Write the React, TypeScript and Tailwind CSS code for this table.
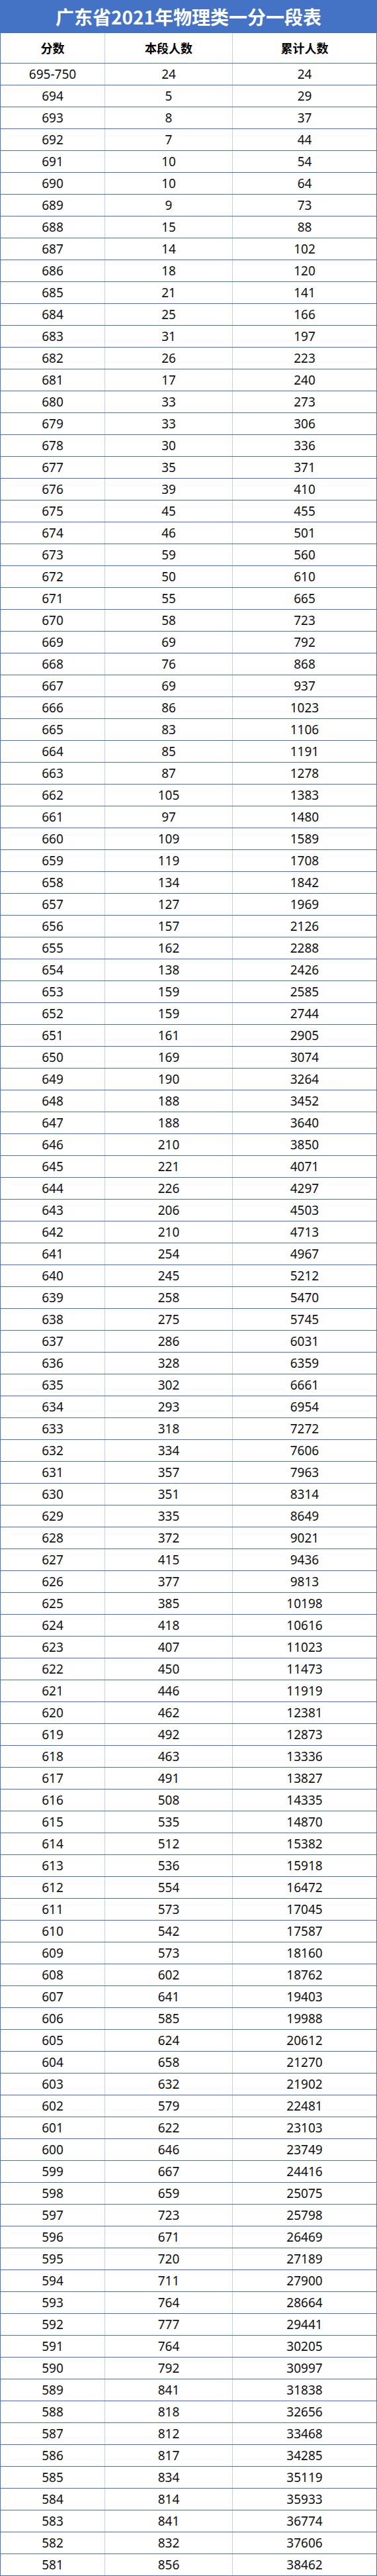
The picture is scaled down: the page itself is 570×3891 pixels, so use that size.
const rows: [string, number, number][] = [
  ["695-750", 24, 24],
  ["694", 5, 29],
  ["693", 8, 37],
  ["692", 7, 44],
  ["691", 10, 54],
  ["690", 10, 64],
  ["689", 9, 73],
  ["688", 15, 88],
  ["687", 14, 102],
  ["686", 18, 120],
  ["685", 21, 141],
  ["684", 25, 166],
  ["683", 31, 197],
  ["682", 26, 223],
  ["681", 17, 240],
  ["680", 33, 273],
  ["679", 33, 306],
  ["678", 30, 336],
  ["677", 35, 371],
  ["676", 39, 410],
  ["675", 45, 455],
  ["674", 46, 501],
  ["673", 59, 560],
  ["672", 50, 610],
  ["671", 55, 665],
  ["670", 58, 723],
  ["669", 69, 792],
  ["668", 76, 868],
  ["667", 69, 937],
  ["666", 86, 1023],
  ["665", 83, 1106],
  ["664", 85, 1191],
  ["663", 87, 1278],
  ["662", 105, 1383],
  ["661", 97, 1480],
  ["660", 109, 1589],
  ["659", 119, 1708],
  ["658", 134, 1842],
  ["657", 127, 1969],
  ["656", 157, 2126],
  ["655", 162, 2288],
  ["654", 138, 2426],
  ["653", 159, 2585],
  ["652", 159, 2744],
  ["651", 161, 2905],
  ["650", 169, 3074],
  ["649", 190, 3264],
  ["648", 188, 3452],
  ["647", 188, 3640],
  ["646", 210, 3850],
  ["645", 221, 4071],
  ["644", 226, 4297],
  ["643", 206, 4503],
  ["642", 210, 4713],
  ["641", 254, 4967],
  ["640", 245, 5212],
  ["639", 258, 5470],
  ["638", 275, 5745],
  ["637", 286, 6031],
  ["636", 328, 6359],
  ["635", 302, 6661],
  ["634", 293, 6954],
  ["633", 318, 7272],
  ["632", 334, 7606],
  ["631", 357, 7963],
  ["630", 351, 8314],
  ["629", 335, 8649],
  ["628", 372, 9021],
  ["627", 415, 9436],
  ["626", 377, 9813],
  ["625", 385, 10198],
  ["624", 418, 10616],
  ["623", 407, 11023],
  ["622", 450, 11473],
  ["621", 446, 11919],
  ["620", 462, 12381],
  ["619", 492, 12873],
  ["618", 463, 13336],
  ["617", 491, 13827],
  ["616", 508, 14335],
  ["615", 535, 14870],
  ["614", 512, 15382],
  ["613", 536, 15918],
  ["612", 554, 16472],
  ["611", 573, 17045],
  ["610", 542, 17587],
  ["609", 573, 18160],
  ["608", 602, 18762],
  ["607", 641, 19403],
  ["606", 585, 19988],
  ["605", 624, 20612],
  ["604", 658, 21270],
  ["603", 632, 21902],
  ["602", 579, 22481],
  ["601", 622, 23103],
  ["600", 646, 23749],
  ["599", 667, 24416],
  ["598", 659, 25075],
  ["597", 723, 25798],
  ["596", 671, 26469],
  ["595", 720, 27189],
  ["594", 711, 27900],
  ["593", 764, 28664],
  ["592", 777, 29441],
  ["591", 764, 30205],
  ["590", 792, 30997],
  ["589", 841, 31838],
  ["588", 818, 32656],
  ["587", 812, 33468],
  ["586", 817, 34285],
  ["585", 834, 35119],
  ["584", 814, 35933],
  ["583", 841, 36774],
  ["582", 832, 37606],
  ["581", 856, 38462],
];

const cell = "flex items-center justify-center";

export default function App() {
  return (
    <div className="w-[570px] bg-white font-['Noto_Sans','Noto_Sans_CJK_SC',sans-serif]">
      <div className="h-[50px] bg-[#4472c4] flex items-center justify-center text-white font-bold text-[28px] font-['Noto_Sans_CJK_SC',sans-serif] leading-none">
        广东省2021年物理类一分一段表
      </div>
      <div className="border-x border-[#4472c4]">
        <div className="grid grid-cols-[158px_193px_1fr] h-[46px] border-b border-[#4472c4] font-bold text-[18px] text-black font-['Noto_Sans_CJK_SC',sans-serif]">
          <div className={`${cell} border-r border-[#c3cfe6]`}>分数</div>
          <div className={`${cell} border-r border-[#c3cfe6]`}>本段人数</div>
          <div className={cell}>累计人数</div>
        </div>
        {rows.map(([score, count, total]) => (
          <div
            key={score}
            className="grid grid-cols-[158px_193px_1fr] h-[33px] border-b border-[#4472c4] text-[19px] text-[#111]"
          >
            <div className={`${cell} border-r border-[#c3cfe6]`}>{score}</div>
            <div className={`${cell} border-r border-[#c3cfe6]`}>{count}</div>
            <div className={cell}>{total}</div>
          </div>
        ))}
      </div>
    </div>
  );
}
